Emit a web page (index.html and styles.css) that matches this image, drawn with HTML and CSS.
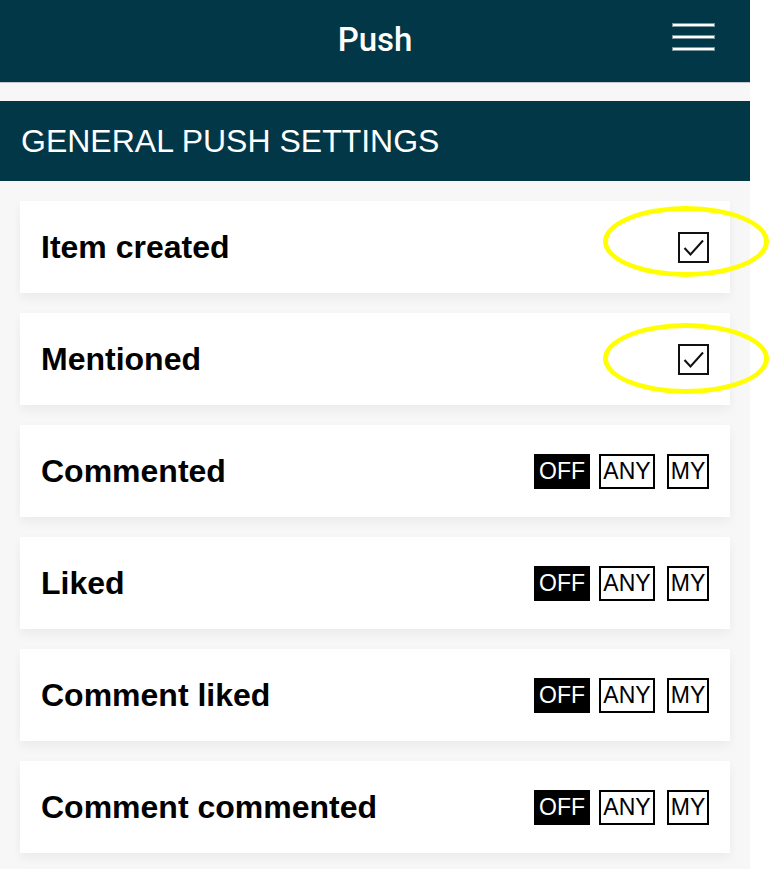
FILE: index.html
```html
<!DOCTYPE html>
<html>
<head>
<meta charset="utf-8">
<link rel="stylesheet" href="styles.css">
</head>
<body>
<div class="app">
  <header class="topbar">
    <h1 class="title">Push</h1>
    <button class="menu" aria-label="Menu"><span></span><span></span><span></span></button>
  </header>
  <h2 class="section">GENERAL PUSH SETTINGS</h2>
  <div class="list">
    <div class="card">
      <span class="label">Item created</span>
      <span class="check"><svg width="27" height="27" viewBox="0 0 27 27"><path d="M4.5 14 L10.5 20.5 L23 6.5" fill="none" stroke="#111" stroke-width="2"/></svg></span>
      <span class="ring"></span>
    </div>
    <div class="card">
      <span class="label">Mentioned</span>
      <span class="check"><svg width="27" height="27" viewBox="0 0 27 27"><path d="M4.5 14 L10.5 20.5 L23 6.5" fill="none" stroke="#111" stroke-width="2"/></svg></span>
      <span class="ring low"></span>
    </div>
    <div class="card">
      <span class="label">Commented</span>
      <div class="seg"><span class="opt on">OFF</span><span class="opt">ANY</span><span class="opt my">MY</span></div>
    </div>
    <div class="card">
      <span class="label">Liked</span>
      <div class="seg"><span class="opt on">OFF</span><span class="opt">ANY</span><span class="opt my">MY</span></div>
    </div>
    <div class="card">
      <span class="label">Comment liked</span>
      <div class="seg"><span class="opt on">OFF</span><span class="opt">ANY</span><span class="opt my">MY</span></div>
    </div>
    <div class="card">
      <span class="label">Comment commented</span>
      <div class="seg"><span class="opt on">OFF</span><span class="opt">ANY</span><span class="opt my">MY</span></div>
    </div>
  </div>
</div>
</body>
</html>
```
FILE: styles.css
```css
html, body {
  margin: 0;
  padding: 0;
  background: #ffffff;
  font-family: "Liberation Sans", Arial, sans-serif;
  overflow: hidden;
}
.app {
  width: 750px;
  min-height: 869px;
  background: #f7f7f7;
}
.topbar {
  height: 82px;
  border-bottom: 1px solid #c4c8ca;
  background: #023747;
  display: flex;
  align-items: center;
  justify-content: center;
  position: relative;
}
.title {
  margin: 0;
  color: #fff;
  font-family: Roboto, "Liberation Sans", sans-serif;
  font-weight: 500;
  font-size: 33px;
  line-height: 1;
  padding-bottom: 4px;
}
.menu {
  position: absolute;
  right: 36px;
  top: 24px;
  width: 41px;
  height: 26px;
  padding: 0;
  border: 0;
  background: transparent;
  display: flex;
  flex-direction: column;
  justify-content: space-between;
}
.menu span {
  display: block;
  height: 2px;
  background: #fff;
  box-shadow: 0 0 0 1px rgba(200,210,214,0.6);
}
.section {
  margin: 18px 0 0;
  height: 80px;
  background: #023747;
  color: #fff;
  font-weight: 400;
  font-size: 32px;
  display: flex;
  align-items: center;
  padding-left: 21px;
  box-sizing: border-box;
}
.list {
  display: flex;
  flex-direction: column;
  gap: 20px;
  padding: 20px 20px 20px;
}
.card {
  position: relative;
  height: 92px;
  background: #fff;
  box-shadow: 0 5px 10px rgba(0,0,0,0.05);
  display: flex;
  align-items: center;
  justify-content: space-between;
  padding: 0 21px;
}
.label {
  font-weight: 700;
  font-size: 32px;
  color: #000;
}
.check {
  width: 27px;
  height: 27px;
  border: 2px solid #111;
  display: block;
}
.check svg { display: block; }
.ring {
  position: absolute;
  left: 583px;
  top: 5px;
  width: 156px;
  height: 61px;
  border: 5px solid #ffff00;
  border-radius: 50%;
  z-index: 2;
}
.ring.low { top: 10px; }
.seg {
  display: flex;
  gap: 9px;
}
.opt {
  box-sizing: border-box;
  width: 56px;
  height: 35px;
  border: 2px solid #000;
  font-size: 23px;
  line-height: 31px;
  text-align: center;
  color: #000;
}
.opt.on {
  background: #000;
  color: #fff;
}
.opt.my { width: 42px; margin-left: 3px; }
```
